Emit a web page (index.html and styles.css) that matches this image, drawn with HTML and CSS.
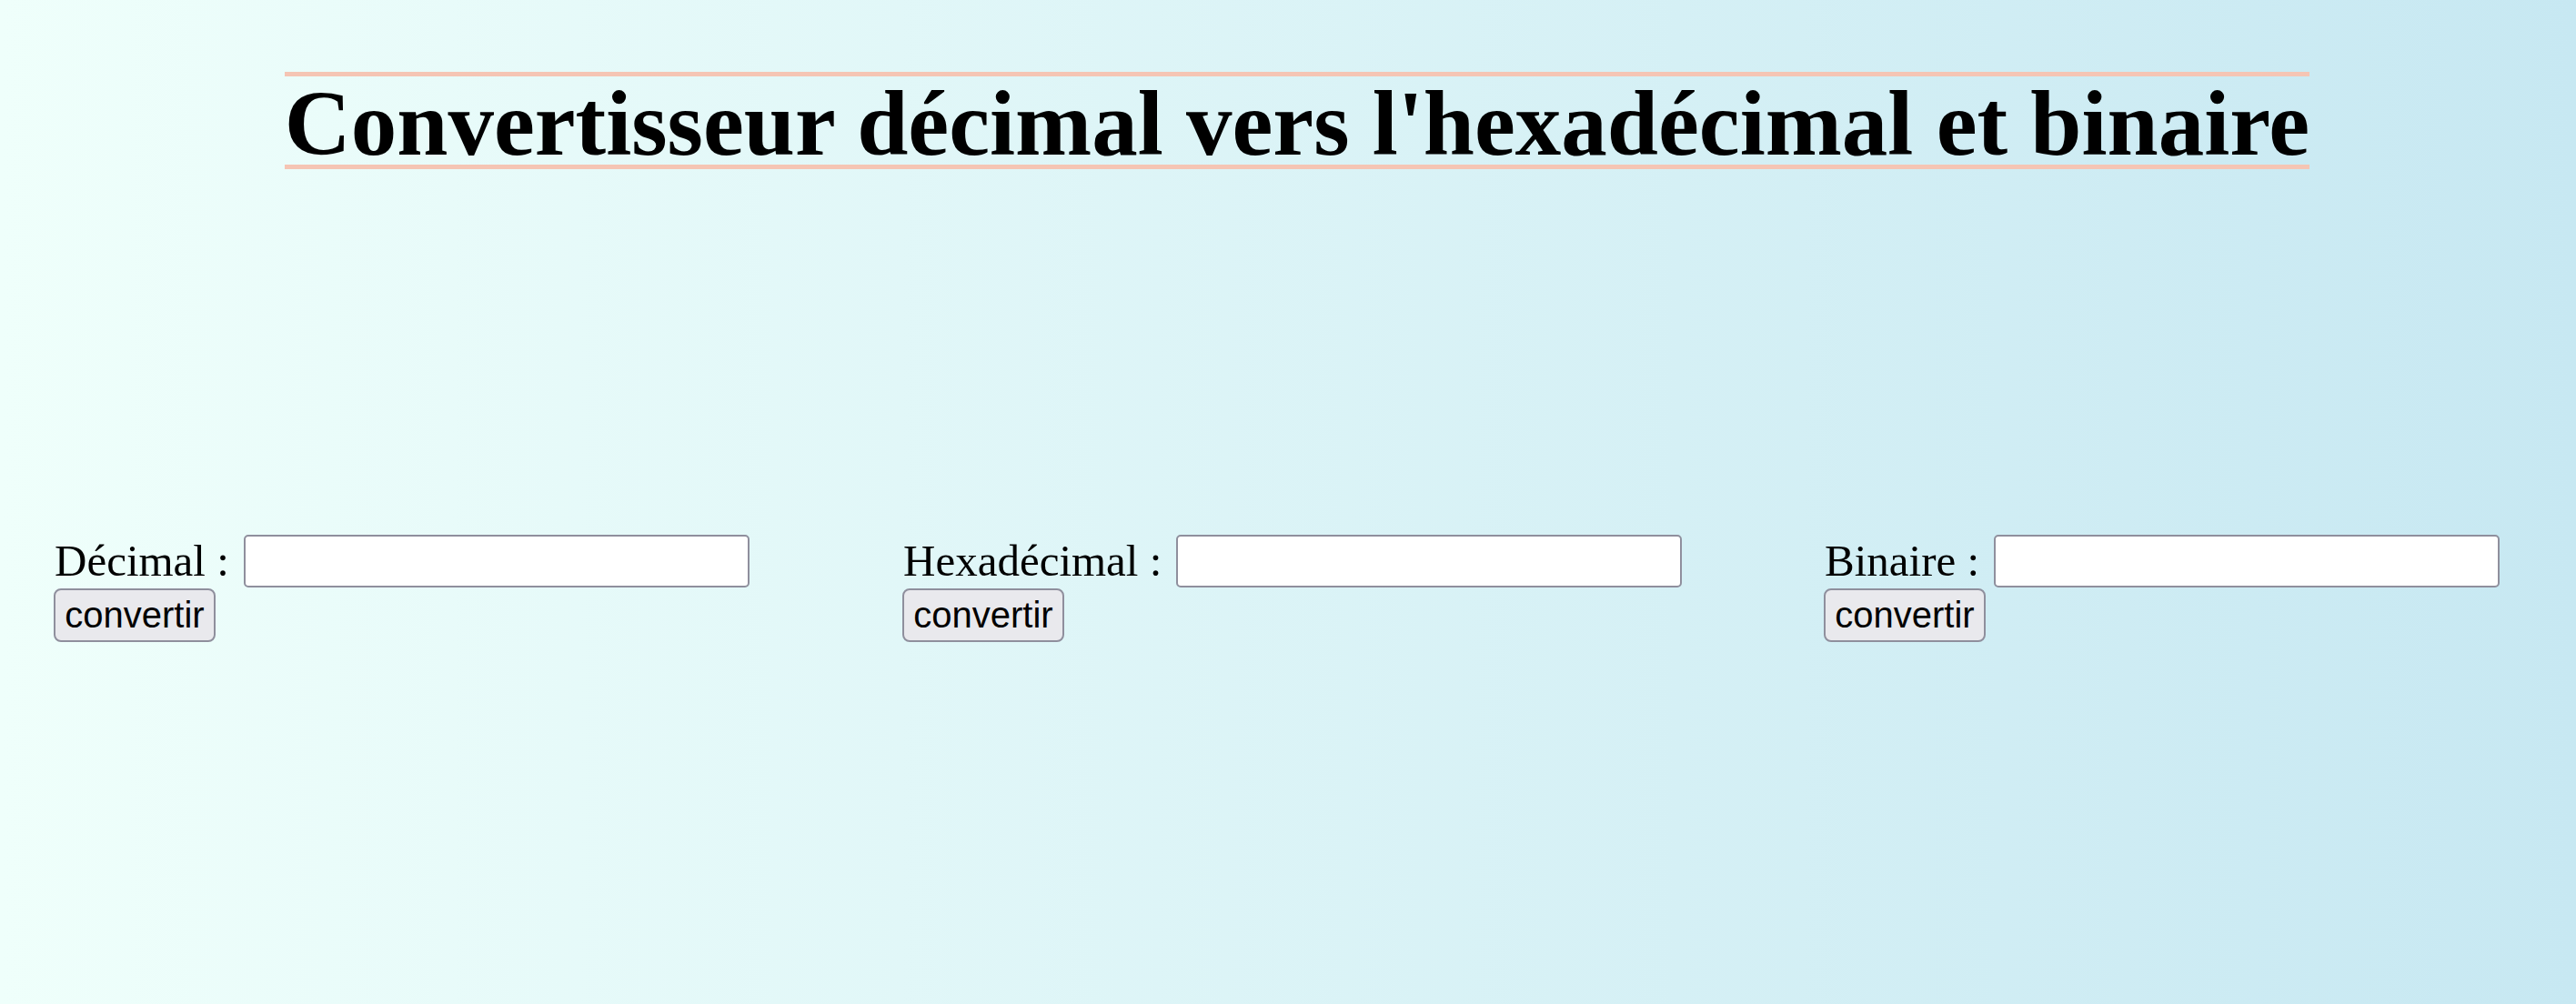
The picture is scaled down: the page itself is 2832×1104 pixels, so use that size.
FILE: index.html
```html
<!DOCTYPE html>
<html lang="fr">
<head>
<meta charset="utf-8">
<title>Convertisseur</title>
<link rel="stylesheet" href="styles.css">
</head>
<body>
<header class="head">
  <h1 class="title">Convertisseur décimal vers l'hexadécimal et binaire</h1>
</header>
<main class="converters">
  <div class="conv">
    <div class="conv-row">
      <label class="conv-label" for="dec">Décimal :</label>
      <input class="conv-input" id="dec" type="text">
    </div>
    <button class="conv-btn" type="button">convertir</button>
  </div>
  <div class="conv">
    <div class="conv-row">
      <label class="conv-label" for="hex">Hexadécimal :</label>
      <input class="conv-input" id="hex" type="text">
    </div>
    <button class="conv-btn" type="button">convertir</button>
  </div>
  <div class="conv">
    <div class="conv-row">
      <label class="conv-label" for="bin">Binaire :</label>
      <input class="conv-input" id="bin" type="text">
    </div>
    <button class="conv-btn" type="button">convertir</button>
  </div>
</main>
</body>
</html>
```
FILE: styles.css
```css
html, body {
  margin: 0;
  padding: 0;
}
body {
  min-height: 100vh;
  background: linear-gradient(to right, #effffb, #c7e8f2);
  font-family: "Liberation Serif", "Times New Roman", serif;
  color: #000;
}
.head {
  display: flex;
  justify-content: center;
  padding: 79px 0 0 20px;
}
.title {
  margin: 0;
  padding-top: 8px;
  font-size: 101px;
  line-height: 89px;
  font-weight: bold;
  border-top: 5px solid #f5c5b4;
  border-bottom: 5px solid #f5c5b4;
}
.converters {
  display: grid;
  grid-template-columns: 933px 1013px 1fr;
  padding: 0 0 0 60px;
  margin-top: 402px;
}
.conv {
  display: flex;
  flex-direction: column;
  align-items: flex-start;
}
.conv-row {
  display: flex;
  align-items: center;
  gap: 16px;
}
.conv-label {
  font-size: 49px;
  line-height: 58px;
}
.conv-input {
  box-sizing: border-box;
  width: 556px;
  height: 58px;
  margin: 0;
  border: 2px solid #8f8f9d;
  border-radius: 5px;
  background: #fff;
  font-size: 40px;
}
.conv-btn {
  box-sizing: border-box;
  margin: 1px 0 0 -1px;
  width: 178px;
  height: 59px;
  padding: 0;
  border: 2px solid #8f8f9d;
  border-radius: 8px;
  background: #e9e9ed;
  color: #000;
  font-family: "Liberation Sans", Arial, sans-serif;
  font-size: 40px;
}
```
